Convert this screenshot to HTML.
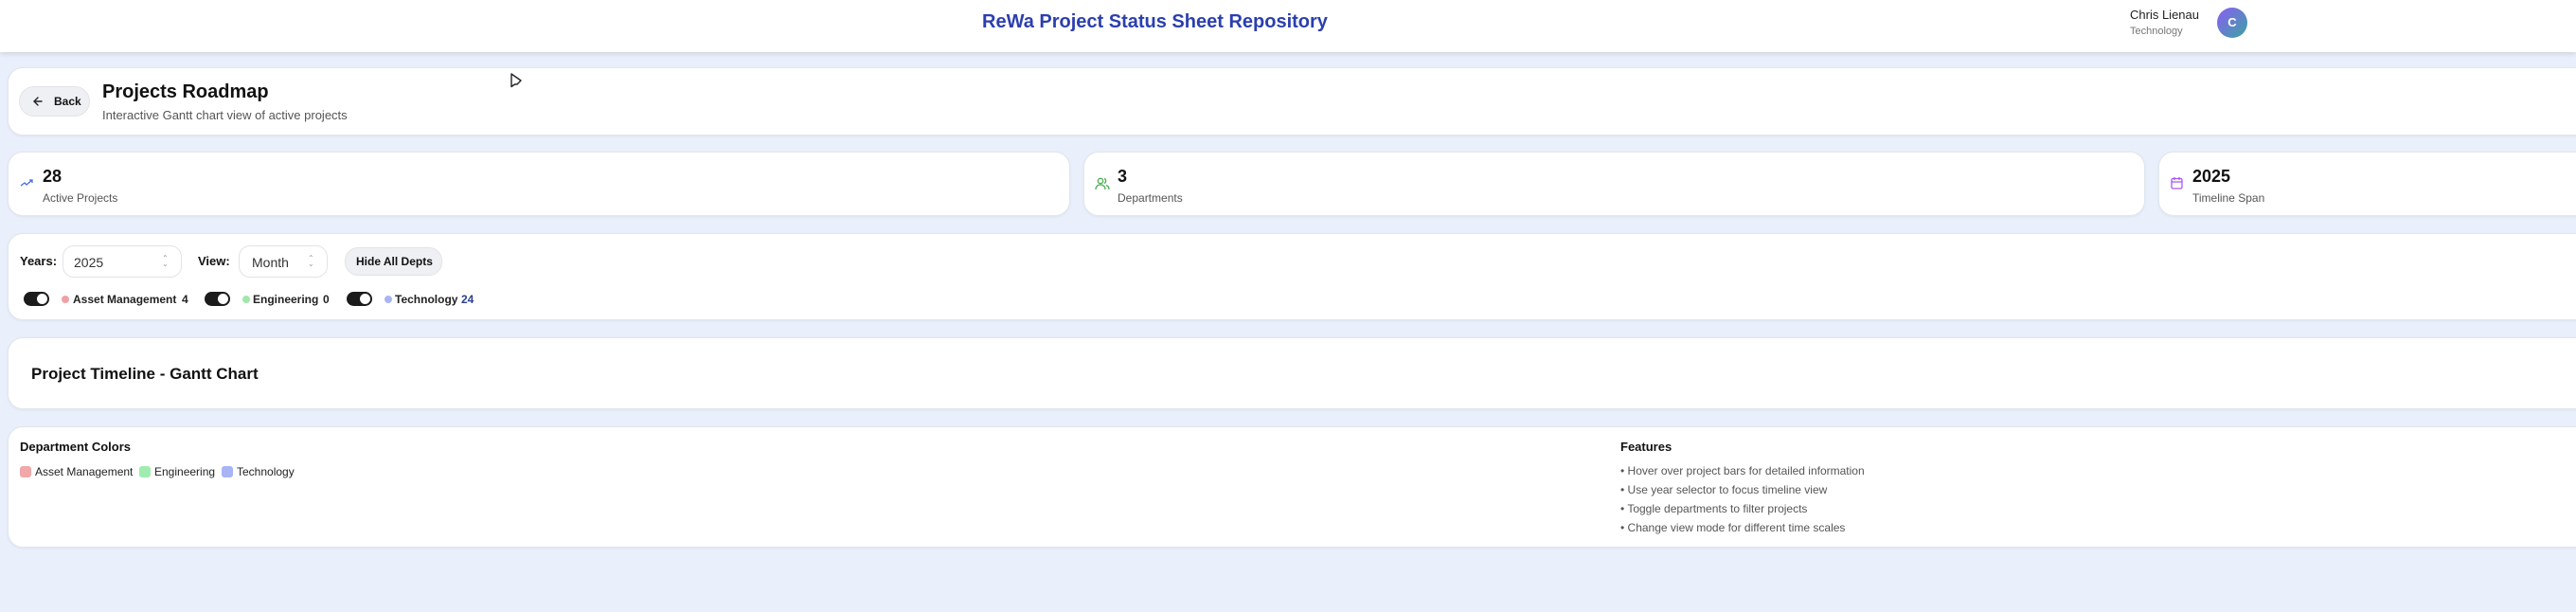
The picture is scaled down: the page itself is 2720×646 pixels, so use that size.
<!DOCTYPE html>
<html><head><meta charset="utf-8"><style>
*{box-sizing:border-box;margin:0;padding:0}
body{width:2720px;height:646px;overflow:hidden;background:#eaf0fb;font-family:"Liberation Sans",sans-serif;position:relative;color:#111}
.abs{position:absolute}
.card{position:absolute;background:#fff;border:1px solid #e2e6ee;border-radius:16px;box-shadow:0 1px 3px rgba(0,0,0,.06)}
.hdr{position:absolute;left:0;top:0;width:2720px;height:55px;background:#fff;box-shadow:0 2px 5px rgba(0,0,0,.12)}
.t{position:absolute;white-space:nowrap}
.sel{position:absolute;border:1px solid #e0e3e8;border-radius:12px;background:#fff;font-size:14px;color:#333}
.tog{position:absolute;width:27px;height:15px;border-radius:8px;background:#1b1b1b}
.tog:after{content:"";position:absolute;right:2px;top:2px;width:11px;height:11px;border-radius:50%;background:#fff}
.dot{position:absolute;width:8px;height:8px;border-radius:50%}
.sw{position:absolute;width:12px;height:12px;border-radius:3px}
.f{font-size:12px;color:#555}
</style></head><body>
<div class="hdr">
  <div class="t" style="left:1037px;top:12px;font-size:20px;font-weight:bold;color:#2b3fae">ReWa Project Status Sheet Repository</div>
  <div class="t" style="left:2249px;top:8px;font-size:13px;color:#222">Chris Lienau</div>
  <div class="t" style="left:2249px;top:27px;font-size:11px;color:#777">Technology</div>
  <div class="abs" style="left:2341px;top:8px;width:32px;height:32px;border-radius:50%;background:linear-gradient(135deg,#8b5cf6,#3aa5a0);color:#fff;font-size:13px;font-weight:bold;text-align:center;line-height:32px">C</div>
</div>

<div class="card" style="left:8px;top:71px;width:3000px;height:72px"></div>
<div class="abs" style="left:20px;top:91px;width:75px;height:32px;border-radius:16px;background:#eef0f3;border:1px solid #e2e4e8"></div>
<svg class="abs" style="left:34px;top:101px" width="12" height="12" viewBox="0 0 12 12"><path d="M10 6H2M6 2L2 6l4 4" stroke="#222" stroke-width="1.4" fill="none" stroke-linecap="round"/></svg>
<div class="t" style="left:57px;top:100px;font-size:12px;font-weight:bold">Back</div>
<div class="t" style="left:108px;top:86px;font-size:20px;font-weight:bold">Projects Roadmap</div>
<div class="t" style="left:108px;top:114px;font-size:13px;color:#555">Interactive Gantt chart view of active projects</div>
<svg class="abs" style="left:538px;top:76px" width="14" height="18" viewBox="0 0 14 18"><path d="M2 2v13.5l3.5-2.5 2.5 0 4-4z" fill="#fff" stroke="#222" stroke-width="1.4" stroke-linejoin="round"/></svg>

<div class="card" style="left:8px;top:160px;width:1122px;height:68px"></div>
<div class="card" style="left:1144px;top:160px;width:1121px;height:68px"></div>
<div class="card" style="left:2279px;top:160px;width:1121px;height:68px"></div>
<svg class="abs" style="left:21px;top:188px" width="15" height="10" viewBox="0 0 15 10"><path d="M1 8l4-3 2 2 6-5M10 2h3v3" stroke="#4b6bf0" stroke-width="1.3" fill="none"/></svg>
<div class="t" style="left:45px;top:176px;font-size:18px;font-weight:bold">28</div>
<div class="t" style="left:45px;top:202px;font-size:12px;color:#555">Active Projects</div>
<svg class="abs" style="left:1156px;top:187px" width="16" height="14" viewBox="0 0 16 14"><circle cx="6" cy="4" r="2.7" stroke="#4caf50" stroke-width="1.3" fill="none"/><path d="M1 13c0-3 2-5 5-5s5 2 5 5M10 1.5a2.7 2.7 0 010 5M12 8.5c2 .7 3 2.3 3 4.5" stroke="#4caf50" stroke-width="1.3" fill="none"/></svg>
<div class="t" style="left:1180px;top:176px;font-size:18px;font-weight:bold">3</div>
<div class="t" style="left:1180px;top:202px;font-size:12px;color:#555">Departments</div>
<svg class="abs" style="left:2292px;top:186px" width="13" height="14" viewBox="0 0 13 14"><rect x="1" y="2.5" width="11" height="10.5" rx="1.5" stroke="#a855f7" stroke-width="1.3" fill="none"/><path d="M1 6h11M4 1v3M9 1v3" stroke="#a855f7" stroke-width="1.3"/></svg>
<div class="t" style="left:2315px;top:176px;font-size:18px;font-weight:bold">2025</div>
<div class="t" style="left:2315px;top:202px;font-size:12px;color:#555">Timeline Span</div>

<div class="card" style="left:8px;top:246px;width:3000px;height:92px"></div>
<div class="t" style="left:21px;top:268px;font-size:13px;font-weight:bold">Years:</div>
<div class="sel" style="left:66px;top:259px;width:126px;height:34px"><span class="t" style="left:11px;top:9px">2025</span><span class="t" style="left:104px;top:10px;font-size:8px;color:#999;line-height:6px">⌃<br>⌄</span></div>
<div class="t" style="left:209px;top:268px;font-size:13px;font-weight:bold">View:</div>
<div class="sel" style="left:252px;top:259px;width:94px;height:34px"><span class="t" style="left:13px;top:9px">Month</span><span class="t" style="left:72px;top:10px;font-size:8px;color:#999;line-height:6px">⌃<br>⌄</span></div>
<div class="abs" style="left:364px;top:261px;width:103px;height:30px;border-radius:14px;background:#eef0f3;border:1px solid #e2e4e8"></div>
<div class="t" style="left:376px;top:269px;font-size:12px;font-weight:bold">Hide All Depts</div>
<div class="tog" style="left:25px;top:308px"></div>
<div class="dot" style="left:65px;top:312px;background:#f0a0a5"></div>
<div class="t" style="left:77px;top:309px;font-size:12px;font-weight:bold;color:#222">Asset Management</div>
<div class="t" style="left:192px;top:309px;font-size:12px;font-weight:bold;color:#222">4</div>
<div class="tog" style="left:216px;top:308px"></div>
<div class="dot" style="left:256px;top:312px;background:#9ee8a8"></div>
<div class="t" style="left:267px;top:309px;font-size:12px;font-weight:bold;color:#222">Engineering</div>
<div class="t" style="left:341px;top:309px;font-size:12px;font-weight:bold;color:#222">0</div>
<div class="tog" style="left:366px;top:308px"></div>
<div class="dot" style="left:406px;top:312px;background:#aab4f5"></div>
<div class="t" style="left:417px;top:309px;font-size:12px;font-weight:bold;color:#222">Technology</div>
<div class="t" style="left:487px;top:309px;font-size:12px;font-weight:bold;color:#2b3f8e">24</div>

<div class="card" style="left:8px;top:356px;width:3000px;height:76px"></div>
<div class="t" style="left:33px;top:385px;font-size:17px;font-weight:bold">Project Timeline - Gantt Chart</div>

<div class="card" style="left:8px;top:450px;width:3000px;height:128px"></div>
<div class="t" style="left:21px;top:464px;font-size:13px;font-weight:bold">Department Colors</div>
<div class="sw" style="left:21px;top:492px;background:#f0a8a8"></div>
<div class="t" style="left:37px;top:491px;font-size:12px;color:#222">Asset Management</div>
<div class="sw" style="left:147px;top:492px;background:#a0ecb0"></div>
<div class="t" style="left:163px;top:491px;font-size:12px;color:#222">Engineering</div>
<div class="sw" style="left:234px;top:492px;background:#a8b4f6"></div>
<div class="t" style="left:250px;top:491px;font-size:12px;color:#222">Technology</div>
<div class="t" style="left:1711px;top:464px;font-size:13px;font-weight:bold">Features</div>
<div class="t f" style="left:1711px;top:490px">• Hover over project bars for detailed information</div>
<div class="t f" style="left:1711px;top:510px">• Use year selector to focus timeline view</div>
<div class="t f" style="left:1711px;top:530px">• Toggle departments to filter projects</div>
<div class="t f" style="left:1711px;top:550px">• Change view mode for different time scales</div>
</body></html>
